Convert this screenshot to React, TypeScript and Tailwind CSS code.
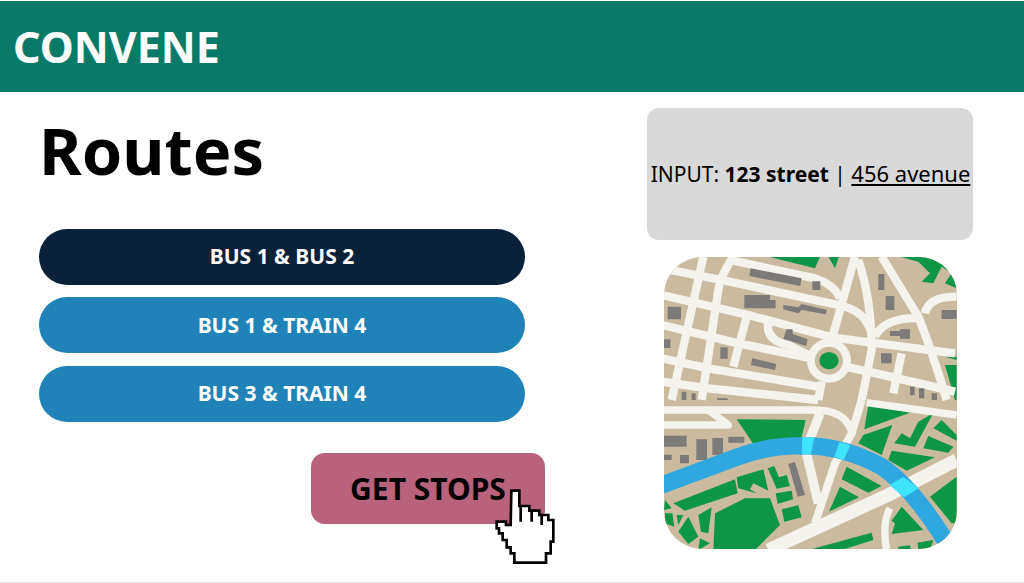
const routes = [
  { label: 'BUS 1 & BUS 2', color: 'bg-[#0a2139]' },
  { label: 'BUS 1 & TRAIN 4', color: 'bg-[#1f83b7]' },
  { label: 'BUS 3 & TRAIN 4', color: 'bg-[#1f83b7]' },
];

function MapArt() {
  const road = '#f5f3ee';
  const green = '#0c9646';
  const gray = '#7d7a7a';
  return (
    <svg viewBox="664 257 293 292" className="w-[293px] h-[292px] rounded-[38px]">
      <rect x="664" y="257" width="293" height="292" fill="#c9baa0" />

      {/* upper half, drawn in the coords of the top crop */}
      <g transform="translate(655 250) scale(0.3333)">
        <path d="M340 20L495 20L480 55ZM520 20L552 20L540 55ZM735 20L860 20L905 70L905 115L870 100L890 70L860 50L835 100L800 95L825 70L790 35Z" fill={green} />
        <path d="M870 320L905 320L905 330ZM870 345L905 345L905 450L900 450Z" fill={green} />
        <g fill="none" stroke={road} strokeWidth="25" strokeLinejoin="round">
          <path d="M225 30L480 85Q540 105 555 145" />
          <path d="M20 55L200 90L550 165Q630 180 650 250" />
          <path d="M20 135L280 195L530 262L900 310" />
          <path d="M20 225L250 280L470 325" />
          <path d="M20 325L160 355L490 410" />
          <path d="M20 395L160 415L490 450" />
          <path d="M570 350L640 365L900 425" />
          <path d="M145 20L50 450" />
          <path d="M235 20Q195 80 190 120L140 450" />
          <path d="M275 200L235 350" />
          <path d="M600 20L530 270" />
          <path d="M610 30Q650 150 650 300L620 450" />
          <path d="M680 20L790 200Q830 300 875 450" />
          <path d="M740 310L715 430" />
          <path d="M660 260Q690 200 800 205" />
          <path d="M810 190Q820 140 905 140" />
          <path d="M340 215Q330 270 400 285L470 320" />
          <path d="M500 395L490 450" />
        </g>
        <circle cx="522" cy="332" r="54" fill="#c9baa0" stroke={road} strokeWidth="24" />
        <ellipse cx="522" cy="332" rx="29" ry="26" fill={green} />
        <path d="M287 55L440 85L436 108L283 78ZM472 94H496V120H472ZM268 135H345V150H362V175H268ZM385 165L430 172L440 162L516 180L512 193L440 180L430 190L385 178ZM395 238H413V252L458 268L454 288L385 266ZM705 243H735V238H765V266H735V258H705ZM860 180H905V207H860ZM38 170H78V208H38ZM27 268H46V294H27ZM196 292H218V326H196ZM292 325L364 342L360 360L288 345ZM678 310H710V340H678ZM670 72H688V120H670ZM692 138H718V180H692ZM765 410H779V436H765ZM792 415H808V445H792ZM830 430H846V450H830ZM80 425H94V450H80ZM110 430H122V450H110ZM186 445H218V450H186Z" fill={gray} />
      </g>

      {/* lower half, drawn in the coords of the bottom crop */}
      <g transform="translate(655 400) scale(0.3333)">
        <path d="M245 58L452 60L440 112L295 132ZM640 15L765 38L628 88ZM625 105L712 75L680 165L610 130ZM790 65L835 40L780 140L718 130L740 100L765 115ZM860 60L905 105V122L835 85ZM820 108L895 140L880 158L805 145ZM710 152L840 172L755 212L700 180ZM575 200L680 258L640 278L560 238ZM555 260L612 292L522 335ZM825 290L905 230V370L890 370ZM245 232L325 208L340 272L295 250L285 268L305 280L250 265ZM338 205L358 198L372 232L395 225L405 258L365 266ZM362 280L410 272L414 298L368 312ZM380 328L430 316L440 352L388 365ZM55 310L240 238L248 280L90 332ZM180 340L270 295L345 295L375 375L300 450L175 450ZM30 300L50 325L27 330ZM30 340L52 340L58 380L30 370ZM65 345L85 345L70 375ZM100 350L130 410L100 432L70 395ZM130 345L170 322L160 400L138 395ZM135 415L165 430L130 450ZM740 320L805 390L710 402L720 370L710 362ZM460 450L650 398L655 420L560 450ZM730 440L765 436L768 450H730ZM788 428L835 420L825 450H790Z" fill={green} />
        <path d="M27 107H95V140H27ZM124 118H156V180H124ZM172 114H204V165H172ZM220 110H268V128H220ZM27 164H50V180H27ZM75 165H102V190H75ZM400 192L420 186L450 285L428 290Z" fill={gray} />
        <g fill="none" stroke={road} strokeLinejoin="round">
          <path d="M27 30H480Q570 30 590 95" strokeWidth="22" />
          <path d="M635 8L905 45" strokeWidth="22" />
          <path d="M27 75H220L160 30" strokeWidth="22" />
          <path d="M495 40L452 150L490 310" strokeWidth="28" />
          <path d="M620 0L590 100L540 190L480 370" strokeWidth="24" />
          <path d="M340 450L700 285L905 180" strokeWidth="40" />
          <path d="M705 325Q680 370 695 450" strokeWidth="22" />
        </g>
        <path d="M20 255Q130 215 250 170Q350 135 440 138Q560 135 680 200Q770 260 870 420" fill="none" stroke="#2fa8e0" strokeWidth="52" />
        <path d="M442 112H478L468 162H440ZM553 126L586 136L566 180L538 170ZM745 231L792 265L748 292L703 255Z" fill="#3fe3ff" />
      </g>
    </svg>
  );
}

function HandCursor() {
  return (
    <svg viewBox="0 0 270 339" className="absolute left-[480px] top-[470px] w-[90px] h-[113px]">
      <path
        d="M94 62H118V108H148V122H178V135H205V150H220V215H212V250H198V278H103V250H92V232H80V210H68V190H57V175H50V155H78V165H92Z"
        fill="#fff"
        stroke="#000"
        strokeWidth="8"
      />
      <path d="M122 108V155M155 122V155M185 135V165" fill="none" stroke="#000" strokeWidth="8" />
    </svg>
  );
}

export default function App() {
  return (
    <div className="relative h-[583px] w-[1024px] overflow-hidden border-b border-[#e5e5e5] bg-white font-['Noto_Sans',sans-serif] text-black">
      <header className="mt-px flex h-[91px] items-center bg-[#0a7a68] pl-[13px]">
        <h1 className="text-[43px] font-bold leading-none text-white">CONVENE</h1>
      </header>

      <main className="flex">
        <section className="w-[647px] pl-[39px]">
          <h2 className="mt-[18px] text-[65px] font-bold leading-[80px]">Routes</h2>
          <div className="mt-[38.75px] flex w-[486px] flex-col gap-[12.5px]">
            {routes.map((route) => (
              <button
                key={route.label}
                className={`h-[56px] rounded-[28px] text-[21px] font-bold text-white ${route.color}`}
              >
                {route.label}
              </button>
            ))}
          </div>
          <button className="mt-[31.25px] ml-[272px] h-[71px] w-[234px] rounded-[14px] bg-[#b9627c] text-[30px] font-bold">
            GET STOPS
          </button>
        </section>

        <aside className="flex w-[326px] flex-col items-center pt-[16px]">
          <div className="flex h-[132px] w-[326px] items-center justify-center rounded-[12px] bg-[#d9d9d9] text-[21px] whitespace-nowrap">
            <span className="ml-[1px]">
              INPUT: <b>123 street</b> | <span className="text-[22px] underline">456 avenue</span>
            </span>
          </div>
          <div className="mt-[17px] flex">
            <MapArt />
          </div>
        </aside>
      </main>

      <HandCursor />
    </div>
  );
}
